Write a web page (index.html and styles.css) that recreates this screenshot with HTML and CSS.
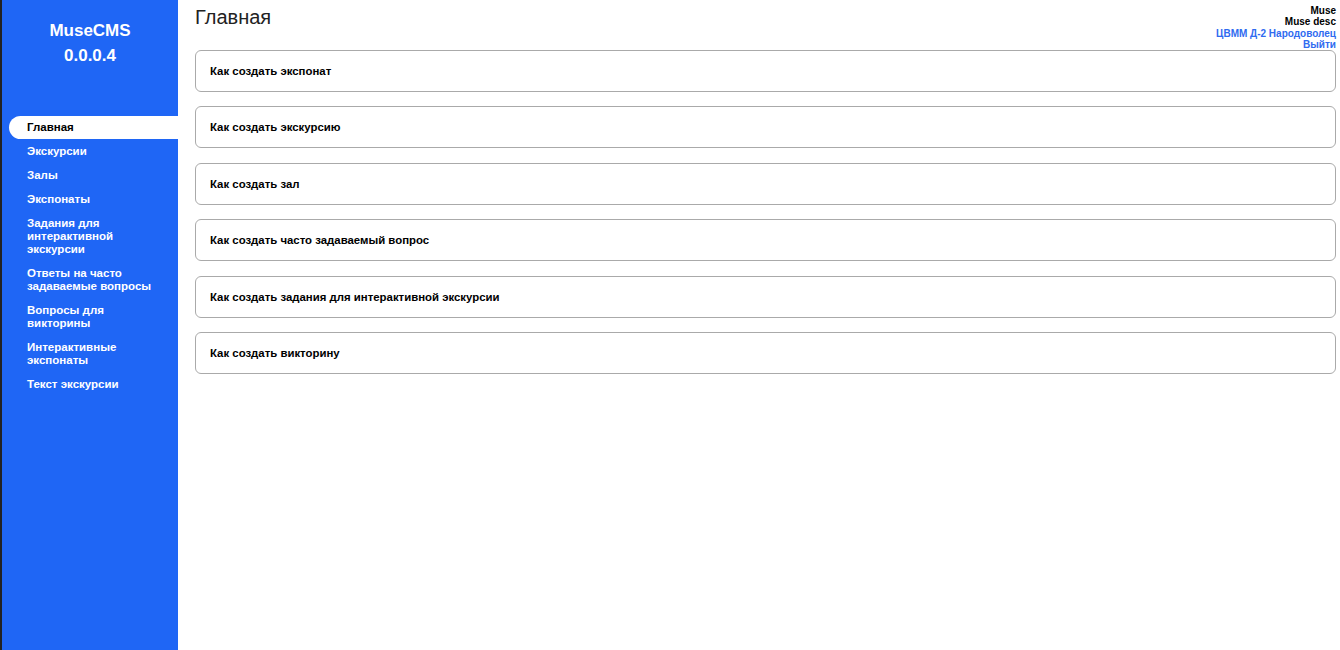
FILE: index.html
```html
<!DOCTYPE html>
<html lang="ru">
  <head>
    <meta charset="UTF-8" />
    <meta name="viewport" content="width=device-width, initial-scale=1.0" />
    <title>MuseCMS</title>
    <link rel="stylesheet" href="styles.css">
  </head>
  <body>
    <div class="layout">
      <aside class="sidebar">
        <div class="brand">
          <div>MuseCMS</div>
          <div>0.0.0.4</div>
        </div>
        <nav class="nav">
          <a class="nav-item active" href="#">Главная</a>
          <a class="nav-item" href="#">Экскурсии</a>
          <a class="nav-item" href="#">Залы</a>
          <a class="nav-item" href="#">Экспонаты</a>
          <a class="nav-item" href="#">Задания для интерактивной экскурсии</a>
          <a class="nav-item" href="#">Ответы на часто задаваемые вопросы</a>
          <a class="nav-item" href="#">Вопросы для викторины</a>
          <a class="nav-item" href="#">Интерактивные экспонаты</a>
          <a class="nav-item" href="#">Текст экскурсии</a>
        </nav>
      </aside>

      <main class="content">
        <div class="user-box">
          <div>Muse</div>
          <div>Muse desc</div>
          <a href="#">ЦВММ Д-2 Народоволец</a>
          <a href="#">Выйти</a>
        </div>

        <h1 class="page-title">Главная</h1>

        <div class="help-list">
          <div class="help-card">Как создать экспонат</div>
          <div class="help-card">Как создать экскурсию</div>
          <div class="help-card">Как создать зал</div>
          <div class="help-card">Как создать часто задаваемый вопрос</div>
          <div class="help-card">Как создать задания для интерактивной экскурсии</div>
          <div class="help-card">Как создать викторину</div>
        </div>
      </main>
    </div>
  </body>
</html>
```

FILE: styles.css
```css
/* Base */
:root {
  --primary-color: #1f66f5;
  --link-color: #2f6bf0;
  --text-color: #000;
}

body {
  margin: 0;
  font-family: "Liberation Sans", Arial, sans-serif;
  color: var(--text-color);
  background: #fff;
}

.layout {
  display: flex;
  min-height: 650px;
}

/* Sidebar */
.sidebar {
  width: 176px;
  flex-shrink: 0;
  background: var(--primary-color);
  border-left: 2px solid #222;
  color: white;
}

.brand {
  padding-top: 18px;
  text-align: center;
  font-size: 17px;
  font-weight: bold;
  line-height: 25px;
}

.nav {
  display: flex;
  flex-direction: column;
  gap: 11px;
  margin-top: 48px;
  padding-left: 7px;
}

.nav-item {
  display: block;
  padding: 0 8px 0 18px;
  color: white;
  text-decoration: none;
  font-size: 11.5px;
  font-weight: bold;
  line-height: 13px;
}

.nav-item.active {
  background: white;
  color: black;
  border-radius: 12px 0 0 12px;
  padding-top: 5px;
  padding-bottom: 5px;
  margin-bottom: -5px;
}

/* Main content */
.content {
  position: relative;
  flex: 1;
  padding: 0 4px 0 17px;
}

.page-title {
  margin: 6px 0 0;
  font-size: 20px;
  font-weight: normal;
  line-height: 23px;
  color: #222;
}

.user-box {
  position: absolute;
  top: 5px;
  right: 4px;
  display: flex;
  flex-direction: column;
  align-items: flex-end;
  font-size: 10px;
  font-weight: bold;
  line-height: 11.3px;
}

.user-box a {
  color: var(--link-color);
  text-decoration: none;
}

.help-list {
  display: flex;
  flex-direction: column;
  gap: 14.4px;
  margin-top: 21px;
}

.help-card {
  height: 40px;
  padding-left: 14px;
  border: 1px solid #aaa;
  border-radius: 6px;
  display: flex;
  align-items: center;
  font-size: 11.4px;
  font-weight: bold;
}
```
